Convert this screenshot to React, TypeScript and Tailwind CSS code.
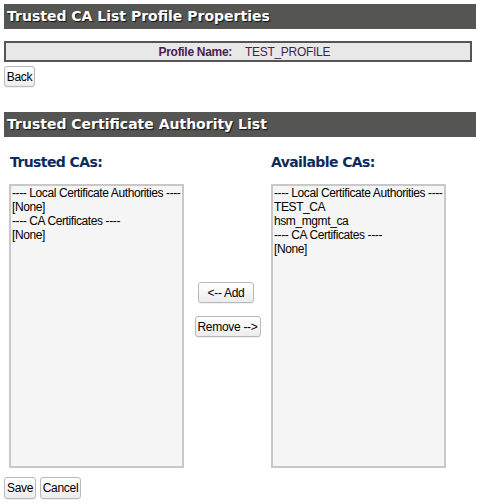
import React from 'react';

const trusted = [
  '---- Local Certificate Authorities ----',
  '[None]',
  '---- CA Certificates ----',
  '[None]',
];

const available = [
  '---- Local Certificate Authorities ----',
  'TEST_CA',
  'hsm_mgmt_ca',
  '---- CA Certificates ----',
  '[None]',
];

function Bar({ title }: { title: string }) {
  return (
    <div className="ml-[4px] flex h-[25px] w-[472px] items-center bg-[#555553] pl-[3px] font-['DejaVu_Sans',Verdana,sans-serif] text-[14px] font-bold text-white [text-shadow:1px_1px_1px_#111]">
      {title}
    </div>
  );
}

function Btn({ label, className = '' }: { label: string; className?: string }) {
  return (
    <button
      type="button"
      className={`flex h-[21px] items-center justify-center whitespace-nowrap rounded-[3px] border border-[#b9b9b9] bg-gradient-to-b from-white to-[#ececec] px-0 font-['Liberation_Sans',Arial,sans-serif] text-[12px] tracking-[-0.3px] text-black shadow-[0_1px_0_rgba(0,0,0,0.06)] ${className}`}
    >
      {label}
    </button>
  );
}

function CaList({ items }: { items: string[] }) {
  return (
    <div className="h-[284px] w-[175px] overflow-hidden border-2 border-[#c8c8c8] bg-[#f5f5f5] px-[1px] font-['Liberation_Sans',Arial,sans-serif] text-[12px] leading-[14px] tracking-[-0.4px] text-black">
      {items.map((item, i) => (
        <div key={i} className="whitespace-nowrap">
          {item}
        </div>
      ))}
    </div>
  );
}

export default function App() {
  return (
    <main className="h-[504px] w-[477px] bg-white pt-[4px]">
      <Bar title="Trusted CA List Profile Properties" />

      <div className="ml-[4px] mt-[12px] flex h-[21px] w-[468px] items-center border-2 border-[#555555] bg-[#e8e8e8] font-['Liberation_Sans',Arial,sans-serif] text-[12px] tracking-[-0.3px] text-[#4a1d4f]">
        <div className="w-1/2 pr-[6px] text-right font-bold">Profile Name:</div>
        <div className="w-1/2 pl-[7px]">TEST_PROFILE</div>
      </div>

      <div className="ml-[4px] mt-[4px]">
        <Btn label="Back" className="w-[31px]" />
      </div>

      <div className="mt-[25px]">
        <Bar title="Trusted Certificate Authority List" />
      </div>

      <div className="ml-[9px] mt-[15px] flex">
        <div>
          <div className="pl-[1px] font-['DejaVu_Sans',Verdana,sans-serif] text-[14px] font-bold leading-[20px] tracking-[-0.6px] text-[#0b2b5c]">
            Trusted CAs:
          </div>
          <div className="mt-[12px]">
            <CaList items={trusted} />
          </div>
        </div>

        <div className="flex w-[87px] flex-col items-center gap-[13px] pt-[130px]">
          <Btn label="<-- Add" className="ml-[-3px] w-[56px]" />
          <Btn label="Remove -->" className="w-[66px]" />
        </div>

        <div>
          <div className="font-['DejaVu_Sans',Verdana,sans-serif] text-[14px] font-bold leading-[20px] tracking-[-0.6px] text-[#0b2b5c]">
            Available CAs:
          </div>
          <div className="mt-[12px]">
            <CaList items={available} />
          </div>
        </div>
      </div>

      <div className="ml-[4px] mt-[9px] flex gap-[4px]">
        <Btn label="Save" className="h-[22px] w-[32px]" />
        <Btn label="Cancel" className="h-[22px] w-[41px]" />
      </div>
    </main>
  );
}
